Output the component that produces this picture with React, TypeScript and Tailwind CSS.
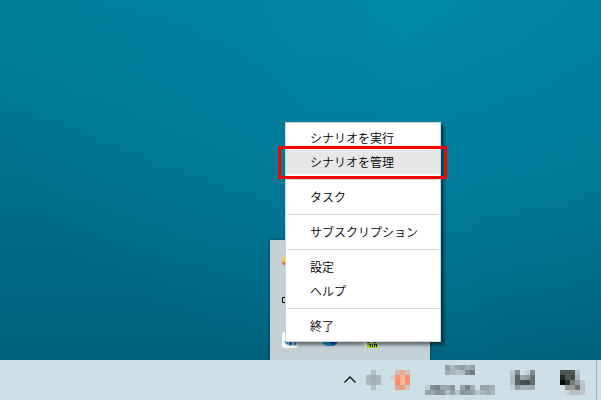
import React from "react";

type Cell = [number, number, string];

function Mosaic({ cells, w, h, className }: { cells: Cell[]; w: number; h: number; className: string }) {
  return (
    <svg className={className} width={w} height={h} shapeRendering="crispEdges" aria-hidden="true">
      {cells.map(([x, y, c]) => (
        <rect key={`${x}-${y}`} x={x} y={y} width="5" height="5" fill={c} />
      ))}
    </svg>
  );
}

const ime: Cell[] = [
  [5, 0, "#b3c3c8"],
  [0, 5, "#a9b8bc"], [5, 5, "#a1adb0"], [10, 5, "#a9b6ba"],
  [0, 10, "#acbbc0"], [5, 10, "#a5b2b5"], [10, 10, "#adb9bc"],
  [5, 15, "#b2c3c8"],
];

const app: Cell[] = [
  [5, 0, "#d8bbb0"], [10, 0, "#e5a892"], [15, 0, "#d5bdb4"],
  [0, 5, "#d2cdca"], [5, 5, "#fb9471"], [10, 5, "#ffb39a"], [15, 5, "#f28f6e"],
  [5, 10, "#ff8a62"], [10, 10, "#ffb7a0"], [15, 10, "#f8946f"],
  [5, 15, "#e5a48d"], [10, 15, "#e89a80"], [15, 15, "#d5c5be"],
];

const time: Cell[] = [
  [0, 0, "#8f9da1"], [5, 0, "#a9b9be"], [10, 0, "#99a8ad"], [15, 0, "#8d9b9f"], [20, 0, "#a1afb4"], [25, 0, "#94a2a6"],
  [0, 5, "#9eacb1"], [5, 5, "#a7b6bb"], [10, 5, "#b4c5ca"], [15, 5, "#b0c0c5"], [20, 5, "#828e92"], [25, 5, "#737f83"],
];

const date: Cell[] = [
  [0, 0, "#bccdd3"], [5, 0, "#84908f"], [10, 0, "#788487"], [15, 0, "#96a4a8"], [20, 0, "#99a7ab"], [25, 0, "#88959a"], [35, 0, "#96a4a9"], [40, 0, "#768286"], [45, 0, "#9fadb2"], [55, 0, "#96a4a9"], [60, 0, "#98a6ab"], [65, 0, "#a1b0b5"],
  [0, 5, "#98a6aa"], [5, 5, "#9aa8ac"], [10, 5, "#869397"], [15, 5, "#8a979b"], [20, 5, "#aebdc2"], [25, 5, "#94a2a6"], [30, 5, "#b5c6cb"], [35, 5, "#8a979b"], [40, 5, "#929fa3"], [45, 5, "#94a1a6"], [50, 5, "#b4c5ca"], [55, 5, "#a6b5ba"], [60, 5, "#9aa8ac"], [65, 5, "#a6b5ba"],
];

const mail: Cell[] = [
  [0, 0, "#b4c5cb"], [5, 0, "#7e8a8d"], [15, 0, "#c0d0d5"], [20, 0, "#7f8b8f"],
  [0, 5, "#aebec4"], [5, 5, "#596365"], [10, 5, "#98a5a9"], [15, 5, "#8d999c"], [20, 5, "#667174"],
  [0, 10, "#afbfc4"], [5, 10, "#596365"], [10, 10, "#454d4f"], [15, 10, "#454d4f"], [20, 10, "#667174"],
  [0, 15, "#bdced4"], [5, 15, "#8d9a9e"], [10, 15, "#a3b0b5"], [15, 15, "#a3b0b5"], [20, 15, "#9aa9ae"],
];

const action: Cell[] = [
  [0, 0, "#4d5455"], [5, 0, "#4e5556"], [10, 0, "#4e5657"], [15, 0, "#b2c2c7"],
  [0, 5, "#222526"], [5, 5, "#52595a"], [10, 5, "#434849"], [15, 5, "#a7b6bb"],
  [0, 10, "#070808"], [5, 10, "#2c2f30"], [10, 10, "#757778"], [15, 10, "#939b9e"], [20, 10, "#bdc6ca"],
  [5, 15, "#929ca0"], [10, 15, "#9a9899"], [15, 15, "#777476"], [20, 15, "#bcc3c6"],
  [5, 20, "#c3d2d7"], [10, 20, "#b8bfc2"], [15, 20, "#b8bdbf"], [20, 20, "#c1c9cb"],
];

const groups = [
  ["シナリオを実行", "シナリオを管理"],
  ["タスク"],
  ["サブスクリプション"],
  ["設定", "ヘルプ"],
  ["終了"],
];

function ContextMenu() {
  return (
    <div
      role="menu"
      className="absolute left-[285px] top-[122px] w-[156px] border border-[#d2d5d7] bg-white py-[3px] text-[12px] font-[350] text-black shadow-[3px_3px_3px_rgba(0,0,0,0.48)]"
    >
      {groups.map((items, i) => (
        <React.Fragment key={i}>
          {i > 0 && <div className="mx-px my-[5px] h-px bg-[#d7d7d7]" />}
          {items.map((label) => (
            <div
              key={label}
              role="menuitem"
              className={`flex h-6 items-center whitespace-nowrap pl-6 leading-6 ${label === "シナリオを管理" ? "bg-[#e7e7e7]" : ""}`}
            >
              {label}
            </div>
          ))}
        </React.Fragment>
      ))}
    </div>
  );
}

function TrayFlyout() {
  return (
    <div className="absolute left-[270px] top-[240px] h-[120px] w-[160px] bg-[#c3d0d5] shadow-[0_0_3px_rgba(0,30,40,0.6)]">
      <svg width="160" height="120" aria-hidden="true">
        <path d="M12 22c0-4 2-6.500 5-6.500v8h-5z" fill="#f9d034" />
        <path d="M12 23l5-3v5h-3q-2 0-2-2" fill="#fa5b6c" />
        <path d="M17 57.500h-4.500v5h4.500" fill="none" stroke="#000" />
        <rect x="12" y="92" width="16" height="16" rx="3" fill="#fff" />
        <path d="M14 101h8v4.500q-6 0-8-4.500" fill="#2d85c8" />
        <path d="M18 101h1v4h-1z" fill="#8bc6ec" />
        <path d="M23.500 101h3v4.500h-3z" fill="#3998d7" />
        <path d="M52 101h16q-1 5-8 5t-8-5" fill="#0c5bc7" />
        <path d="M52 101h6l4 4q-7 2-10-4" fill="#12a7d9" />
        <path d="M92 101h16v3h-11v3q-4-1-5-6" fill="#f3f7ee" />
        <path d="M97 101h3v2h-3zM103 101h3v2h-3z" fill="#24659b" />
        <rect x="97" y="103" width="11" height="5" fill="#a4e800" />
        <path d="M99 104h2v3h-1v-2h-1zM102 104h1v3h-1zM104 104h3v3h-1v-2h-1v2h-1z" fill="#18320c" />
      </svg>
    </div>
  );
}

function Taskbar() {
  return (
    <div className="relative z-10 flex h-10 w-full shrink-0 items-start bg-linear-to-r from-[#cbdfe6] to-[#cde0e7] pl-[343px]">
      <svg className="mt-[15px]" width="14" height="10" fill="none" stroke="#111" strokeWidth="1.3" aria-hidden="true">
        <path d="M1.500 7.500L7 2l5.500 5.500" />
      </svg>
      <Mosaic cells={ime} w={15} h={20} className="ml-[9px] mt-[10px]" />
      <Mosaic cells={app} w={20} h={20} className="ml-[9px] mt-[10px]" />
      <div className="ml-[15px] mt-[5px] flex w-[70px] flex-col">
        <Mosaic cells={time} w={30} h={10} className="ml-[20px]" />
        <Mosaic cells={date} w={70} h={10} className="mt-[10px]" />
      </div>
      <Mosaic cells={mail} w={25} h={20} className="ml-[15px] mt-[10px]" />
      <Mosaic cells={action} w={25} h={25} className="ml-[25px] mt-[10px]" />
      <div className="ml-[11px] h-10 w-px bg-[#9eafb6]" />
    </div>
  );
}

export default function App() {
  return (
    <div className="relative flex h-[400px] w-[601px] flex-col overflow-hidden bg-[#00708d] font-['Noto_Sans_CJK_JP',sans-serif]">
      <div className="min-h-0 flex-1 bg-[linear-gradient(78deg,transparent_48%,rgba(0,155,185,0.06)_54%,transparent_60%,rgba(0,155,185,0.05)_70%,transparent_76%),radial-gradient(ellipse_460px_380px_at_420px_0px,rgba(0,139,170,0.8),rgba(0,133,165,0.55)_45%,transparent),linear-gradient(180deg,#007f99_0%,#00718c_45%,#00617b_100%)]" />
      <TrayFlyout />
      <Taskbar />
      <ContextMenu />
      <div className="absolute left-[278px] top-[146px] z-20 h-[33px] w-[169px] border-3 border-[#ff0000]" />
    </div>
  );
}
